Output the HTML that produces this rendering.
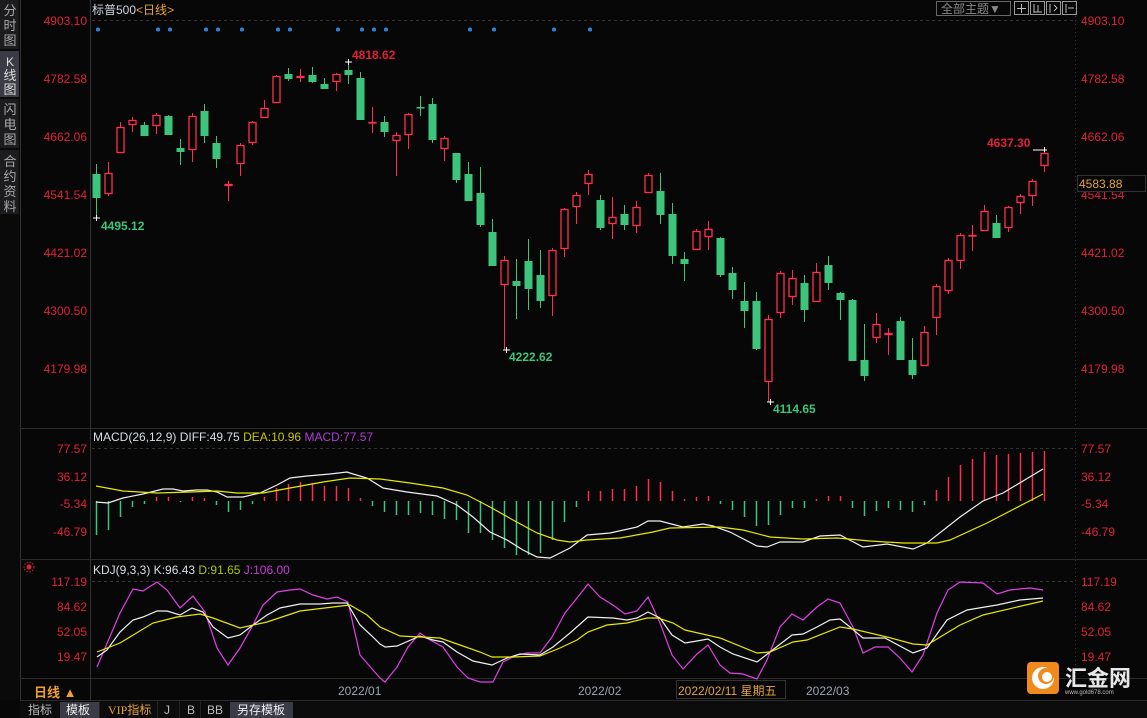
<!DOCTYPE html>
<html><head><meta charset="utf-8"><style>
html,body{margin:0;padding:0;background:#070707;width:1147px;height:718px;overflow:hidden;font-family:"Liberation Sans","Noto Sans CJK SC",sans-serif}
svg{position:absolute;left:0;top:0}
</style></head><body>
<svg id="s" width="1147" height="718" viewBox="0 0 1147 718" xmlns="http://www.w3.org/2000/svg" font-family="Liberation Sans, Noto Sans CJK SC, sans-serif">
<rect width="1147" height="718" fill="#070707"/>
<rect x="0" y="0" width="20" height="700" fill="#0a0a0a"/>
<rect x="0" y="0" width="19" height="49" fill="#1c1c1f"/>
<rect x="0" y="51" width="19" height="46" fill="#3a3b44"/>
<rect x="0" y="99" width="19" height="49" fill="#1c1c1f"/>
<rect x="0" y="150" width="19" height="64" fill="#1c1c1f"/>
<g fill="#a8a8a8" font-size="13" text-anchor="middle">
<text x="10" y="15">分</text><text x="10" y="30">时</text><text x="10" y="45">图</text>
<text x="10" y="66" fill="#ddd" font-size="12">K</text><text x="10" y="80" fill="#ddd">线</text><text x="10" y="94" fill="#ddd">图</text>
<text x="10" y="114">闪</text><text x="10" y="129">电</text><text x="10" y="144">图</text>
<text x="10" y="166">合</text><text x="10" y="181">约</text><text x="10" y="196">资</text><text x="10" y="211">料</text>
</g>
<line x1="20.5" y1="0" x2="20.5" y2="700" stroke="#333"/>
<line x1="90.5" y1="0" x2="90.5" y2="678" stroke="#333"/>
<line x1="1075.5" y1="0" x2="1075.5" y2="678" stroke="#333" stroke-dasharray="1 3"/>
<g stroke="#2a2a2a"><line x1="20" y1="428.5" x2="1147" y2="428.5"/><line x1="20" y1="559.5" x2="1147" y2="559.5"/><line x1="20" y1="678.5" x2="1147" y2="678.5"/><line x1="20" y1="700.5" x2="1147" y2="700.5"/></g>
<g stroke="#333" stroke-dasharray="3 3"><line x1="92" y1="20.5" x2="1075" y2="20.5"/><line x1="92" y1="448.5" x2="1075" y2="448.5"/><line x1="92" y1="581.5" x2="1075" y2="581.5"/></g>
<text x="92" y="14" font-size="12" fill="#cfd6e0">标普500<tspan fill="#e6a23c">&lt;日线&gt;</tspan></text>
<rect x="936.5" y="1.5" width="74" height="14" fill="none" stroke="#666"/>
<text x="941" y="13" font-size="12" fill="#8a8a8a">全部主题▼</text>
<g fill="none" stroke="#999"><rect x="1014.5" y="1.5" width="14" height="13"/><rect x="1030.5" y="1.5" width="14" height="13"/><rect x="1046.5" y="1.5" width="14" height="13"/><rect x="1062.5" y="1.5" width="14" height="13"/></g>
<g stroke="#bbb"><path d="M1021.5 4v9M1017 8.5h9M1034 4v9M1038 5v7M1034 12h8M1050 4v9M1054 5l3 3-3 3M1066 4v9M1068 8h6"/></g>
<g font-size="12" fill="#e0213c" text-anchor="end">
<text x="87" y="25">4903.10</text><text x="87" y="83">4782.58</text><text x="87" y="141">4662.06</text><text x="87" y="199">4541.54</text><text x="87" y="257">4421.02</text><text x="87" y="315">4300.50</text><text x="87" y="373">4179.98</text>
<text x="87" y="453">77.57</text><text x="87" y="481">36.12</text><text x="87" y="508">-5.34</text><text x="87" y="536">-46.79</text>
<text x="87" y="586">117.19</text><text x="87" y="611">84.62</text><text x="87" y="636">52.05</text><text x="87" y="661">19.47</text>
</g>
<g font-size="12" fill="#e0213c">
<text x="1081" y="25">4903.10</text><text x="1081" y="83">4782.58</text><text x="1081" y="141">4662.06</text><text x="1081" y="199">4541.54</text><text x="1081" y="257">4421.02</text><text x="1081" y="315">4300.50</text><text x="1081" y="373">4179.98</text>
<text x="1081" y="453">77.57</text><text x="1081" y="481">36.12</text><text x="1081" y="508">-5.34</text><text x="1081" y="536">-46.79</text>
<text x="1081" y="586">117.19</text><text x="1081" y="611">84.62</text><text x="1081" y="636">52.05</text><text x="1081" y="661">19.47</text>
</g>
<rect x="1077.5" y="175.5" width="68" height="16" fill="#070707" stroke="#333"/>
<text x="1079" y="188" font-size="12" fill="#e6a23c">4583.88</text>
<g id="dots" fill="#2288e0"></g>
<g id="candles"></g>
<g font-size="12" font-weight="bold">
<text x="352" y="59" fill="#e0213c">4818.62</text>
<text x="101" y="230" fill="#3cc47c">4495.12</text>
<text x="509" y="361" fill="#3cc47c">4222.62</text>
<text x="773" y="413" fill="#3cc47c">4114.65</text>
<text x="987" y="147" fill="#e0213c">4637.30</text>
</g>
<g stroke="#fff"><path d="M93 218h7M96.5 215v6M345 62h7M348.5 59v6M503 350h7M506.5 347v6M767 402h7M770.5 399v6M1033 150h14M1044.5 147v5"/></g>
<text x="93" y="441" font-size="12" fill="#d8dde6">MACD(26,12,9) DIFF:49.75 <tspan fill="#c8c800">DEA:10.96</tspan> <tspan fill="#b03cd8">MACD:77.57</tspan></text>
<g id="macd"></g>
<circle cx="29" cy="567" r="2.5" fill="#e0213c"/><circle cx="29" cy="567" r="5" fill="none" stroke="#e0213c" stroke-dasharray="1.5 1.5"/>
<text x="93" y="574" font-size="12" fill="#d8dde6">KDJ(9,3,3) K:96.43 <tspan fill="#a8c800">D:91.65</tspan> <tspan fill="#c83cd8">J:106.00</tspan></text>
<g id="kdj"></g>
<text x="34" y="697" font-size="13" font-weight="bold" fill="#f0a030">日线 ▲</text>
<line x1="90.5" y1="678" x2="90.5" y2="700" stroke="#333"/>
<g font-size="12" fill="#9aa4b2"><text x="338" y="695">2022/01</text><text x="578" y="695">2022/02</text><text x="806" y="695">2022/03</text></g>
<rect x="676.5" y="680.5" width="109" height="18" fill="#070707" stroke="#333"/>
<text x="678" y="695" font-size="12" fill="#e6a23c">2022/02/11 星期五</text>
<rect x="20" y="701" width="1127" height="17" fill="#0c0c0c"/>
<rect x="60" y="702" width="39" height="16" fill="#3a3b44"/>
<rect x="230" y="702" width="63" height="16" fill="#3a3b44"/>
<g font-size="12" fill="#bbb"><text x="28" y="714">指标</text><text x="66" y="714" fill="#eee">模板</text><text x="108" y="714" fill="#e6a23c" font-family="Liberation Serif, Noto Sans CJK SC, serif">VIP指标</text><text x="164" y="714">J</text><text x="187" y="714">B</text><text x="207" y="714">BB</text><text x="237" y="714" fill="#eee">另存模板</text></g>
<g stroke="#222"><line x1="99.5" y1="701" x2="99.5" y2="718"/><line x1="157.5" y1="701" x2="157.5" y2="718"/><line x1="179.5" y1="701" x2="179.5" y2="718"/><line x1="200.5" y1="701" x2="200.5" y2="718"/></g>
<rect x="1027" y="662" width="32" height="32" rx="4" fill="#f08a1c"/>
<circle cx="1043" cy="678" r="11" fill="#fff"/><circle cx="1046" cy="676" r="8" fill="#f08a1c"/><circle cx="1047" cy="677" r="5" fill="#fff"/>
<text x="1065" y="686" font-size="22" fill="#e8e8e8" font-weight="bold">汇金网</text>
<text x="1065" y="694" font-size="6" fill="#bbb">www.gold678.com</text>
</svg>
<script>
var NS="http://www.w3.org/2000/svg";
function el(p,t,a){var e=document.createElementNS(NS,t);for(var k in a)e.setAttribute(k,a[k]);p.appendChild(e);return e;}
var C=[["g",174,198,164,218],["r",173,194,162,196],["r",127,153,122,153],["r",120,125,117,132],["g",125,136,122,136],["r",115,126,113,134],["g",116,135,115,135],["g",148,152,139,165],["r",116,150,113,162],["g",111,136,104,143],["g",143,159,136,168],["r",184,186,181,201],["r",145,164,143,176],["r",122,143,121,145],["r",108,118,100,118],["r",76,103,75,103],["g",74,79,68,81],["r",76,78,69,82],["g",75,82,67,83],["g",84,89,78,89],["r",74,82,73,91],["g",70,75,62,84],["g",78,120,72,120],["r",122,123,107,133],["g",122,132,116,137],["r",135,141,132,176],["r",114,135,113,149],["g",107,108,96,116],["g",104,140,98,143],["r",138,149,136,161],["g",153,180,153,183],["g",174,201,162,201],["g",193,225,167,227],["g",232,266,219,266],["r",260,285,256,350],["g",281,286,259,319],["g",261,289,239,310],["g",275,301,250,308],["r",250,296,248,316],["r",209,249,208,257],["r",195,207,192,224],["r",174,184,170,195],["g",200,228,195,230],["r",217,224,197,239],["g",214,225,205,230],["r",207,226,201,233],["r",175,193,173,193],["g",191,215,173,224],["g",214,256,203,264],["g",259,264,252,281],["r",231,250,229,250],["r",229,237,221,250],["g",238,275,237,277],["g",273,290,267,299],["g",301,311,282,328],["g",301,349,292,350],["r",319,382,315,402],["r",273,313,271,318],["r",278,297,270,305],["g",283,310,275,322],["r",272,302,263,302],["g",265,283,256,290],["g",293,300,292,320],["g",300,361,299,361],["g",360,376,324,381],["r",324,338,313,343],["r",333,335,328,355],["g",321,360,317,360],["g",360,375,338,379],["r",332,366,326,366],["r",286,318,284,335],["r",260,291,258,294],["r",235,261,233,269],["r",235,236,225,251],["r",211,231,205,231],["g",223,238,215,238],["r",207,228,206,232],["r",196,203,194,214],["r",181,196,179,206],["r",153,166,150,172]];
var RED="#ff2e4c",GRN="#3cc47c";
var cg=document.getElementById("candles");
C.forEach(function(c,i){var x=96.5+12*i,col=c[0]=="r"?RED:GRN;
el(cg,"line",{x1:x,y1:c[3],x2:x,y2:c[4],stroke:col,"stroke-width":1});
var h=Math.max(c[2]-c[1],1.5);
if(c[0]=="r")el(cg,"rect",{x:x-3.5,y:c[1]+0.5,width:7,height:h-1,fill:"#070707",stroke:col,"stroke-width":1.3});
else el(cg,"rect",{x:x-4,y:c[1],width:8,height:h,fill:col});});
var dg=document.getElementById("dots");
[98,158,170,206,218,242,278,290,338,362,374,386,470,494,554,590].forEach(function(x){el(dg,"circle",{cx:x,cy:29.5,r:2});});
var H=[535,530,517,507,504,497,497,502,497,498,505,512,510,504,497,488,484,482,483,486,486,488,498,506,512,515,515,513,515,519,520,533,533,540,548,555,555,553,540,522,507,491,491,489,489,486,479,482,491,499,497,496,504,510,517,526,525,515,508,508,499,496,496,508,516,511,508,510,512,505,490,477,465,459,452,455,454,453,452,451];
var mg=document.getElementById("macd");
H.forEach(function(y,i){var x=96.5+12*i;el(mg,"line",{x1:x,y1:501,x2:x,y2:y,stroke:y<501?RED:GRN,"stroke-width":1.5});});
function pl(g,pts,col){el(g,"polyline",{points:pts,fill:"none",stroke:col,"stroke-width":1.2});}
pl(mg,"96,502 108,503 123,498 143,494 163,489 173,489 183,491 197,490 207,490 217,492 227,497 243,497 260,493 277,485 290,478 307,476 330,474 347,472 353,474 367,478 383,488 407,492 437,496 457,505 473,517 490,532 507,540 523,550 537,557 550,558 570,548 587,535 610,533 637,527 648,521 660,521 683,527 703,524 713,526 730,532 757,546 767,547 780,542 803,542 820,536 840,535 863,547 887,544 913,549 927,543 960,517 983,501 1003,493 1043,469","#f0f0f0");
pl(mg,"96,486 123,491 157,493 190,492 217,491 237,493 263,493 290,488 323,482 350,478 380,479 410,483 443,488 467,495 490,507 513,520 537,533 557,540 570,542 587,540 620,538 653,532 670,528 720,527 743,530 770,537 803,539 837,538 870,541 903,543 937,543 950,540 987,523 1043,494","#e8e800");
var kg=document.getElementById("kdj");
pl(kg,"97,667 120,613 133,589 143,591 157,582 167,590 180,608 193,596 205,612 217,648 228,665 240,648 253,625 263,605 277,592 290,590 300,589 313,595 327,599 337,597 348,602 360,655 373,670 380,678 385,682 397,667 408,647 420,633 430,640 443,647 457,667 468,678 480,682 493,682 503,662 517,655 527,653 540,653 552,637 565,613 577,598 588,584 600,597 613,605 625,614 637,611 648,597 660,623 672,655 683,669 697,654 708,645 720,665 730,673 743,674 757,679 767,660 780,627 792,614 803,620 817,607 828,599 840,603 853,627 863,653 875,647 888,647 900,658 912,672 923,655 937,613 948,590 960,582 983,583 997,594 1010,590 1030,588 1043,590","#e040e8");
pl(kg,"97,657 107,650 120,632 133,620 143,617 157,611 167,611 180,615 192,608 203,612 213,627 228,638 240,635 253,625 267,615 280,608 300,604 320,604 333,603 347,603 360,625 373,637 380,644 385,647 397,646 420,636 433,640 443,642 457,652 473,661 492,665 507,658 520,654 540,655 553,647 570,633 588,617 613,618 627,620 637,618 648,612 660,618 672,635 685,643 697,641 708,639 720,647 733,654 757,662 770,652 792,635 803,634 817,627 830,620 840,619 850,627 863,638 885,638 913,653 927,648 947,620 967,610 997,605 1020,600 1043,598","#f0f0f0");
pl(kg,"97,652 120,643 153,623 177,617 200,614 213,618 240,628 267,622 300,611 333,607 350,605 367,615 380,627 400,636 420,637 440,638 460,645 480,652 492,657 513,657 540,656 560,648 577,640 588,632 607,625 627,623 647,618 658,618 673,623 685,630 720,638 757,653 770,652 793,642 807,640 840,627 853,629 887,637 913,644 927,645 960,625 983,615 1043,601","#e8e800");
</script>
</body></html>
